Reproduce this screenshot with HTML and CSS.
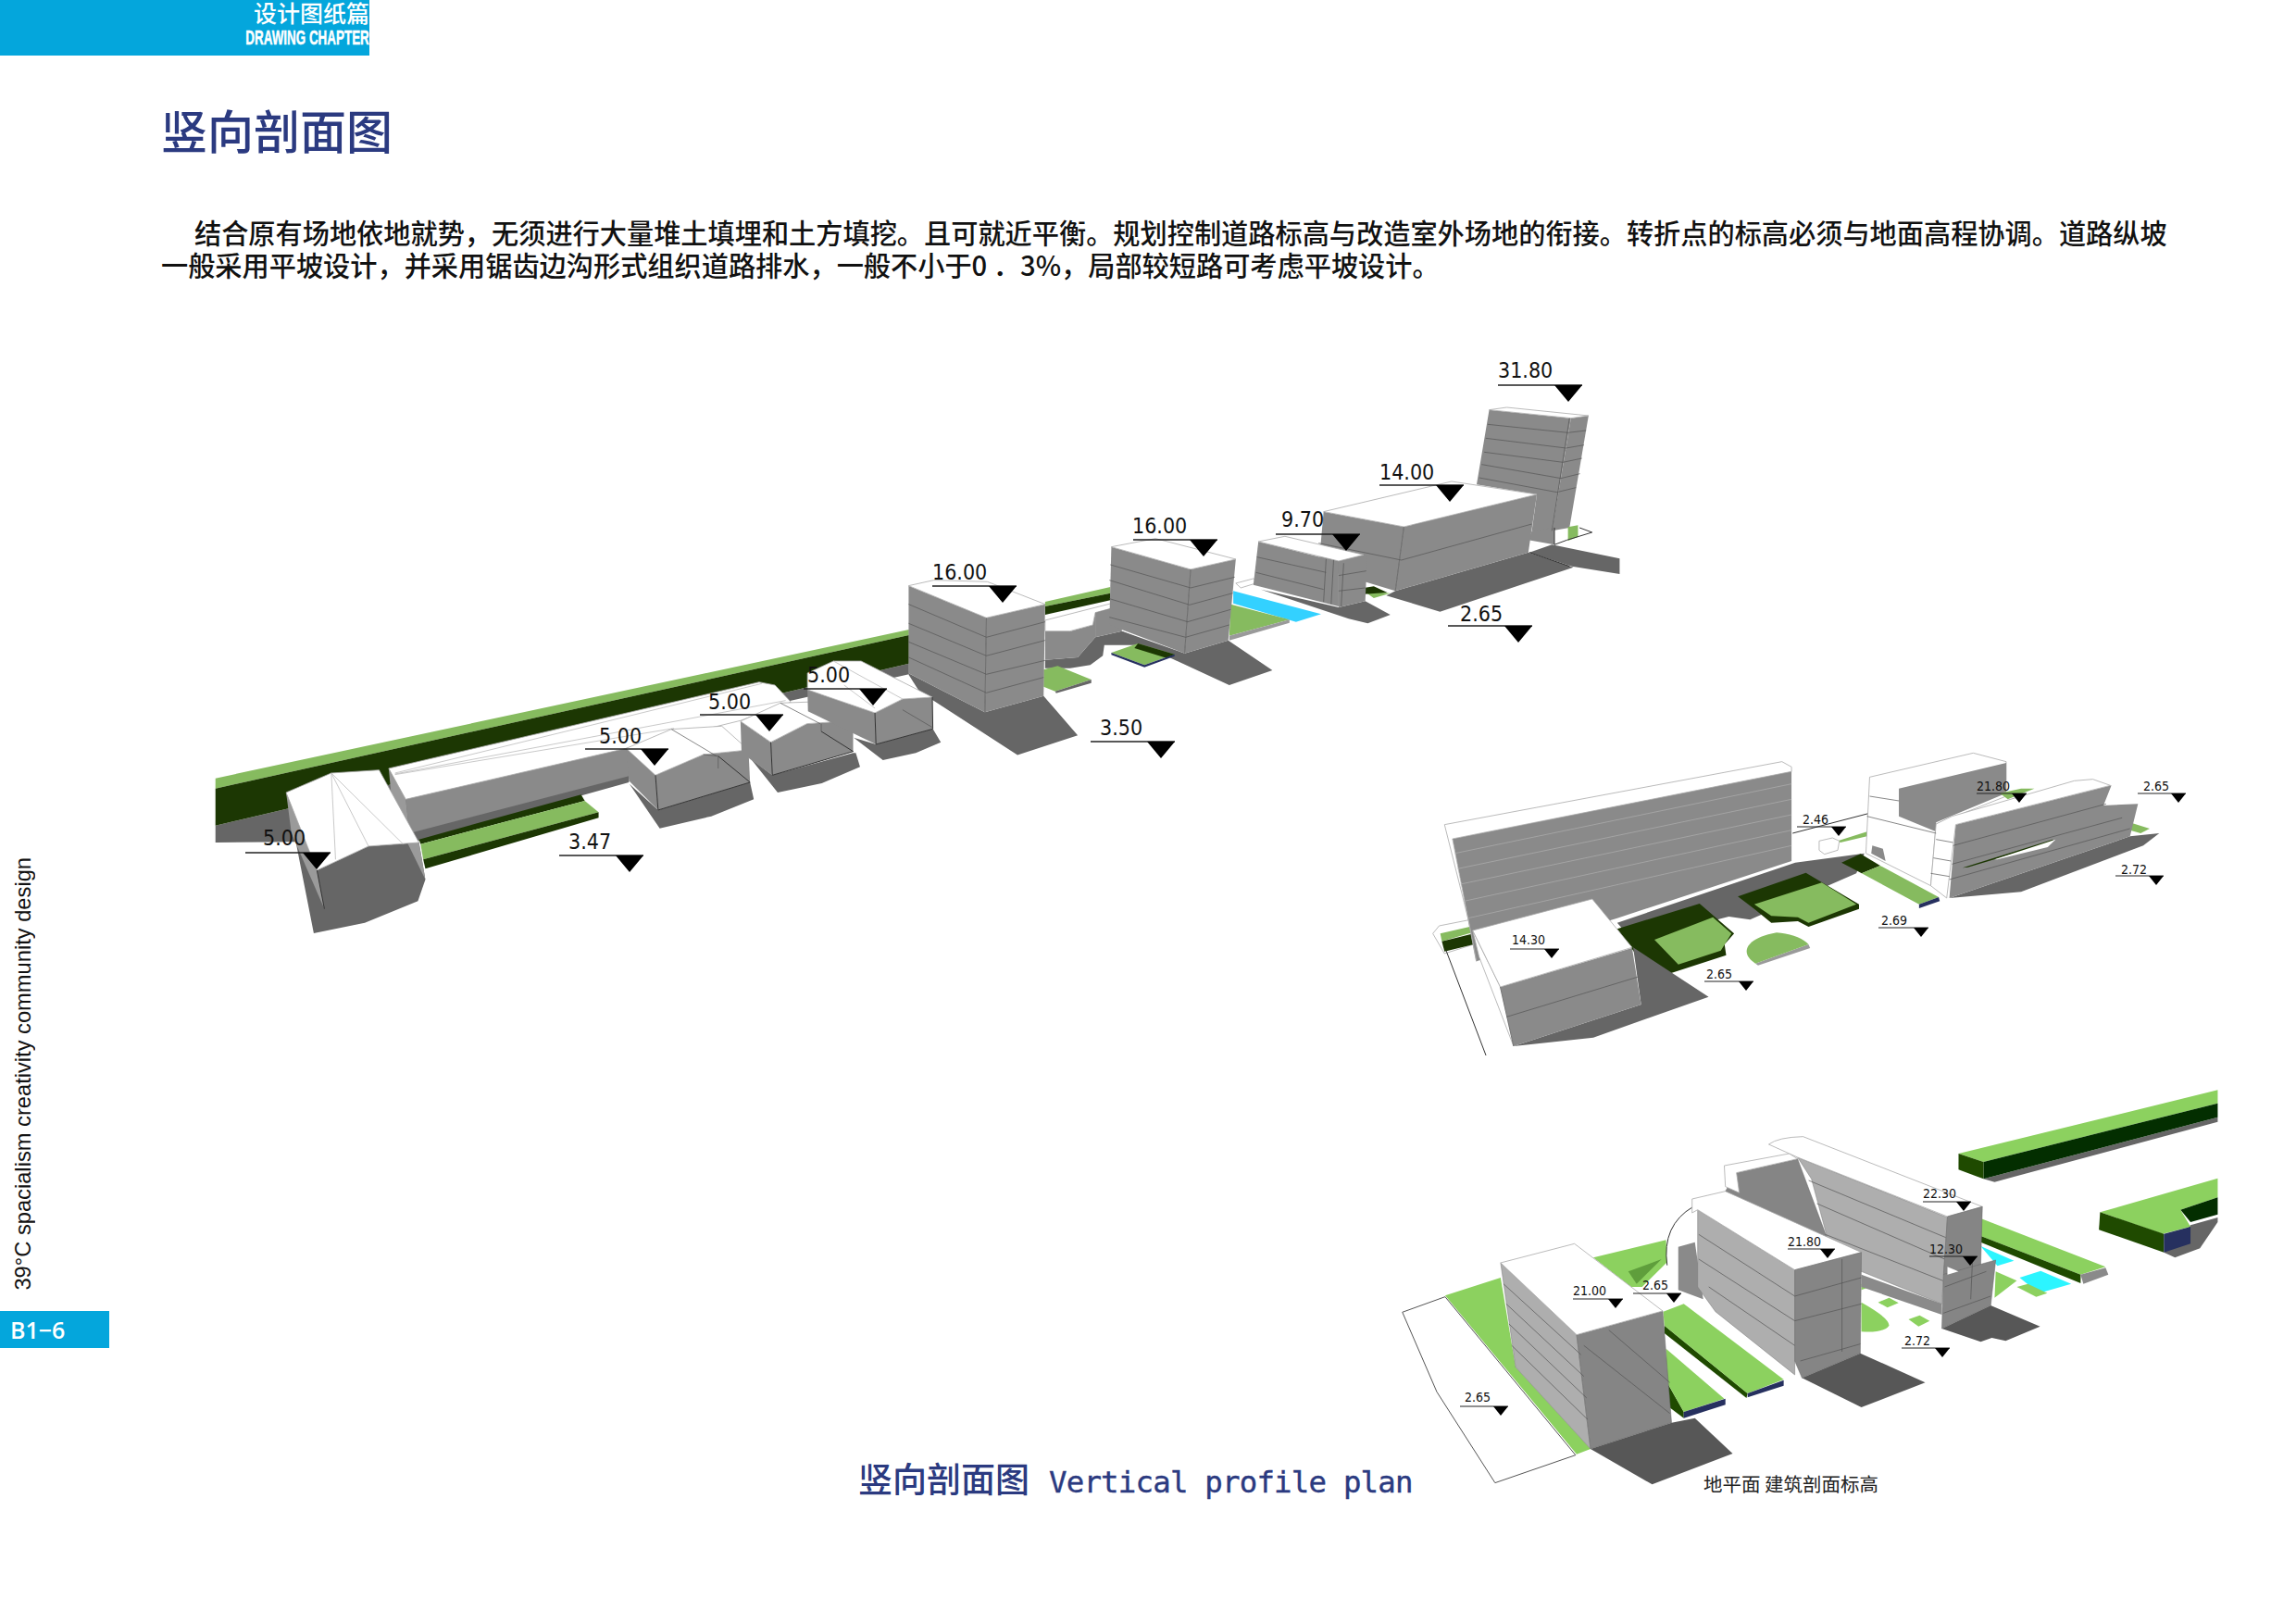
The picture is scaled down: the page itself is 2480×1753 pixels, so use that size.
FILE: index.html
```html
<!DOCTYPE html>
<html lang="zh-CN">
<head>
<meta charset="utf-8">
<title>竖向剖面图</title>
<link rel="stylesheet" href="styles.css">
</head>
<body>
<div class="page">
  <svg class="canvas" viewBox="0 0 2480 1753" width="2480" height="1753">
    <!-- shadow that runs under the first row of houses -->
    <g class="zb">
      <polygon class="s" points="58,1102 210,1228 327,1175 395,1303 275,1367 60,1140"/>
    </g>
    <!-- top model, left part -->
    <g class="za">
      <polygon class="s" points="57,875 1362,350 1362,385 1140,470 835,600 835,735 440,925 57,930"/>
      <polygon class="g" points="57,722 1362,240 1362,258 57,755"/>
      <polygon class="dg" points="57,755 1362,258 1362,350 57,875"/>
      <polygon class="w" points="1338,396 1362,388 1385,450 1360,450"/>
      <polygon class="f" points="415,790 835,620 835,715 422,900"/>
      <polygon class="f2" points="383,690 415,790 422,900 388,780"/>
      <polygon class="r" points="383,690 1080,410 1110,420 1140,475 1045,535 830,625 415,790"/>
      <path class="l" d="M395,705 1085,415M395,708 1130,470M395,710 920,560"/>
      <polygon class="dg" points="440,920 745,775 752,795 443,935"/>
      <polygon class="g" points="443,935 752,795 778,832 448,985"/>
      <polygon class="dg" points="448,985 778,832 778,850 452,1015"/>
      <polygon class="s" points="190,768 248,1020 345,942 440,930 452,1050 438,1120 338,1190 242,1224"/>
      <polygon class="f2" points="190,768 248,1020 262,1145 200,900"/>
      <polygon class="f2" points="418,930 440,930 452,1050"/>
      <polygon class="r" points="190,768 275,705 365,695 440,930 345,942 248,1020"/>
      <path class="l" d="M275,705 283,985M275,705 345,942M275,705 410,935"/>
      <path class="e" d="M248,1020 262,1145"/>
      <polygon class="s" points="836,740 890,825 1063,735 1070,790 990,845 893,884"/>
      <polygon class="f" points="830,625 885,712 890,825 835,730"/>
      <polygon class="f" points="885,712 975,645 1060,630 1063,735 890,825"/>
      <polygon class="r" points="830,625 915,563 1010,553 1060,630 975,645 885,712"/>
      <path class="e" d="M885,712 890,825 1063,735M1003,650 1063,735"/>
      <path class="n" d="M975,645 1003,650 1003,690M915,563 1000,650"/>
      <polygon class="s" points="1065,660 1105,712 1257,640 1262,640 1270,685 1198,738 1115,768"/>
      <polygon class="f" points="1045,537 1102,605 1105,712 1047,640"/>
      <polygon class="f" points="1102,605 1170,545 1257,535 1257,635 1105,712"/>
      <polygon class="r" points="1045,537 1120,478 1215,472 1257,535 1170,545 1102,605"/>
      <path class="e" d="M1102,605 1105,712 1257,635M1197,570 1257,635"/>
      <path class="n" d="M1197,545 1197,570M1120,478 1195,545"/>
      <polygon class="s" points="1258,590 1300,612 1407,562 1422,605 1375,640 1313,663"/>
      <polygon class="f" points="1171,435 1298,510 1300,612 1172,505"/>
      <polygon class="f" points="1298,510 1350,465 1406,459 1407,562 1300,612"/>
      <polygon class="r" points="1171,381 1220,342 1272,342 1406,459 1350,465 1298,510 1171,435"/>
      <path class="e" d="M1298,510 1300,612 1407,562M1406,459 1407,562"/>
      <path class="n" d="M1350,500 1407,558"/>
      <path class="l" d="M1220,342 1350,465M1240,420 1298,495"/>
    </g>
    <!-- top model, right part -->
    <g class="zb">
      <polygon class="g" points="330,870 460,822 460,842 330,885"/>
      <polygon class="dg" points="330,885 460,842 460,865 330,912"/>
      <polygon class="s" points="330,1058 395,1050 430,985 483,965 600,1040 510,1010 448,1010 445,1045 420,1075 380,1085 330,1085"/>
      <polygon class="f" points="330,965 380,965 425,945 430,905 430,985 395,1050 330,1058"/>
      <polygon class="r" points="330,930 470,872 485,882 430,905 425,945 380,965 330,965"/>
      <polygon class="f" points="430,905 485,880 483,965 430,985"/>
      <polygon class="g" points="327,1090 355,1078 422,1122 350,1160 327,1145"/>
      <polygon class="s" points="350,1160 422,1122 422,1133 352,1166"/>
      <polygon class="f" points="58,818 213,922 210,1228 58,1102"/>
      <polygon class="f" points="213,922 330,878 327,1175 210,1228"/>
      <polygon class="r" points="58,818 108,800 215,805 330,878 213,922"/>
      <path class="n" d="M58,878 213,985M58,940 213,1045M58,1000 213,1105M58,1050 213,1165M213,985 330,935M213,1045 330,995M213,1105 330,1060M213,1165 327,1115M213,922 210,1228"/>
      <polygon class="s" points="483,965 608,1037 695,995 783,1092 697,1140 490,985"/>
      <polygon class="g" points="462,1035 515,1005 588,1040 528,1075"/>
      <polygon class="dg" points="515,1005 588,1040 572,1052 508,1020"/>
      <polygon class="nv" points="462,1035 528,1075 588,1040 588,1046 528,1082 462,1042"/>
      <polygon class="cy" points="705,835 880,910 830,935 705,875"/>
      <polygon class="g" points="700,878 817,928 697,980"/>
      <polygon class="f2" points="697,980 817,928 817,938 697,995"/>
      <polygon class="f" points="462,692 620,765 608,1037 458,945"/>
      <polygon class="f" points="620,765 710,732 695,995 608,1037"/>
      <polygon class="r" points="462,692 550,665 710,732 620,765"/>
      <path class="n" d="M460,750 620,825M458,800 618,880M458,860 614,935M458,920 610,985M620,825 708,790M618,880 704,842M614,935 700,895M610,985 697,945M620,765 608,1037"/>
      <polygon class="s" points="1028,835 1293,710 1383,758 1117,902 1010,850"/>
      <polygon class="s" points="1295,710 1340,685 1475,730 1475,780 1380,755"/>
      <polygon class="f" points="1215,248 1378,275 1340,640 1300,640 1310,522 1190,490"/>
      <polygon class="f" points="1378,275 1413,267 1375,630 1340,640"/>
      <polygon class="f" points="1300,640 1345,630 1345,685 1293,670"/>
      <polygon class="r" points="1215,248 1250,240 1413,267 1378,275"/>
      <path class="n" d="M1212,295 1372,322M1208,340 1368,372M1205,385 1362,418M1200,425 1358,470M1195,468 1350,515M1372,322 1408,315M1368,372 1404,362M1362,418 1400,405M1358,470 1396,455M1350,515 1388,500M1375,275 1340,640"/>
      <polygon class="g" points="1372,628 1392,622 1392,660 1372,672"/>
      <path class="e" d="M1345,630 1345,685 1370,670 1420,645 1395,630"/>
      <polygon class="f" points="885,578 1045,627 1028,835 875,760"/>
      <polygon class="f" points="1045,627 1310,522 1293,710 1028,835"/>
      <polygon class="r" points="885,578 1140,480 1310,522 1045,627"/>
      <path class="n" d="M875,680 1040,735 1300,618M1045,627 1028,835"/>
      <polygon class="g" points="965,835 1000,840 1018,842 985,858"/>
      <polygon class="dg" points="965,825 985,820 1012,840 965,845"/>
      <path class="e" d="M1295,710 1375,755"/>
      <polygon class="s" points="760,830 915,888 968,868 1018,912 973,940 935,925"/>
      <polygon class="r" points="710,810 745,795 760,805 720,825"/>
      <polygon class="f" points="755,675 915,740 915,885 745,815"/>
      <polygon class="f" points="915,740 972,725 968,868 915,888"/>
      <polygon class="r" points="755,675 808,658 965,718 915,738"/>
      <path class="n" d="M752,725 890,775M750,775 885,830M915,785 970,770M915,835 968,825M890,732 885,870M905,735 900,878M925,745 920,885"/>
    </g>
    <!-- middle model -->
    <g class="zc">
      <polygon class="s" points="430,590 765,395 895,365 880,430 680,580 640,570 460,650"/>
      <polygon class="r" points="83,625 95,600 160,578 160,660 105,690"/>
      <polygon class="g" points="97,625 160,600 160,620 100,650"/>
      <polygon class="dg" points="100,650 160,625 160,660 105,683"/>
      <polygon class="f" points="120,318 758,95 758,390 430,575 165,715"/>
      <polygon class="r" points="105,272 740,68 758,85 758,100 120,318 165,715 150,580"/>
      <path class="nl" d="M125,365 758,140M130,415 758,190M135,465 758,240M142,520 758,290M150,575 758,340"/>
      <path class="e" d="M108,680 183,1020"/>
      <polygon class="dg" points="430,610 585,528 650,625 632,660 635,695 498,772 460,680"/>
      <polygon class="g" points="500,645 610,572 645,625 625,680 545,725"/>
      <polygon class="dg" points="657,505 785,428 885,530 885,545 790,603 770,585 720,590 688,545"/>
      <polygon class="g" points="688,530 815,460 880,530 790,590 770,572 720,568"/>
      <path class="f2" d="M690,722 790,660 793,672 695,728Z"/>
      <path class="g" d="M690,722C660,690 670,640 730,622 755,625 780,640 790,660Z"/>
      <polygon class="dg" points="852,395 888,367 925,405 890,430"/>
      <polygon class="g" points="890,430 925,405 1035,507 998,530"/>
      <polygon class="nv" points="998,530 1035,507 1037,520 998,543"/>
      <path class="e" d="M760,300 905,235"/>
      <polygon class="g" points="845,325 900,295 900,310 850,330"/>
      <polygon class="r" points="810,325 835,315 848,325 845,355 820,368 810,355"/>
      <polygon class="r" points="905,118 1100,40 1162,68 1162,180 1030,270 1020,470 898,365"/>
      <polygon class="f" points="960,155 1162,72 1162,170 1030,265 1030,295 960,245"/>
      <polygon class="s" points="1055,510 1395,310 1450,300 1420,340 1190,490"/>
      <polygon class="g" points="1400,268 1432,285 1415,300 1395,290"/>
      <polygon class="f" points="1067,272 1360,145 1345,210 1410,205 1395,310 1055,510"/>
      <polygon class="r" points="1030,270 1060,245 1290,130 1325,125 1358,145 1067,272 1050,510 1020,470"/>
      <path class="n" d="M905,180 960,195M900,245 1030,300M1062,340 1350,205M1060,400 1380,250M1055,450 1395,285M1030,320 1062,330M1025,380 1058,390M1020,430 1055,440"/>
      <polygon class="dg" points="1080,412 1250,320 1250,328 1090,410"/>
      <polygon class="w" points="1140,385 1255,320 1240,345 1145,385"/>
      <polygon class="f" points="910,340 930,350 935,390 908,365"/>
      <polygon class="g" points="1150,170 1190,155 1215,155 1165,190"/>
      <polygon class="s" points="235,990 475,855 460,670 602,830 385,962"/>
      <polygon class="f" points="210,798 458,672 475,855 235,990"/>
      <polygon class="r" points="158,615 210,798 235,990 170,700"/>
      <polygon class="r" points="158,615 383,513 458,670 210,798"/>
      <path class="n" d="M222,895 470,765M210,798 235,990"/>
    </g>
    <!-- bottom model -->
    <g class="zd">
      <polygon class="r2" points="58,772 135,722 370,1235 225,1325 120,1030"/>
      <polygon class="g2" points="402,595 533,538 535,610 490,690 470,690"/>
      <polygon class="g3" points="465,640 525,600 480,680"/>
      <polygon class="g2" points="135,718 235,660 262,950 397,1215 372,1232"/>
      <polygon class="sd" points="397,1215 543,1130 585,1115 653,1230 508,1330"/>
      <polygon class="dg2" points="535,1000 565,1095 565,1115 535,1075"/>
      <polygon class="g2" points="533,890 638,1052 565,1095 535,1000"/>
      <polygon class="nv" points="565,1095 640,1052 640,1072 565,1115"/>
      <polygon class="dg2" points="530,815 680,1035 678,1050 530,840"/>
      <polygon class="g2" points="528,770 565,745 745,990 680,1035 530,815"/>
      <polygon class="nv" points="680,1035 745,992 745,1010 680,1048"/>
      <polygon class="fl" points="235,612 372,845 397,1215 262,950"/>
      <polygon class="fr" points="372,845 527,768 543,1130 397,1215"/>
      <polygon class="r" points="235,612 368,550 527,768 372,845"/>
      <path class="n" d="M240,680 380,910M245,745 385,980M250,810 390,1050M255,880 392,1120M385,880 540,1100M430,830 540,1000"/>
      <polygon class="sd" points="778,985 883,905 1000,1000 885,1080"/>
      <path class="g2" d="M885,740Q935,790 935,815 925,840 885,835Z"/>
      <polygon class="g2" points="915,740 935,725 952,742 932,757"/>
      <polygon class="g2" points="970,795 990,782 1008,800 988,818"/>
      <polygon class="g2" points="885,680 900,690 885,700"/>
      <polygon class="f" points="885,650 1030,745 1030,780 885,690"/>
      <polygon class="g2" points="1100,468 1325,625 1280,650 1100,525"/>
      <polygon class="dg2" points="1100,525 1280,650 1280,678 1100,545"/>
      <polygon class="f" points="1280,650 1325,628 1330,650 1285,680"/>
      <polygon class="cy2" points="1100,558 1160,605 1130,622"/>
      <polygon class="cy2" points="1170,660 1208,638 1263,680 1205,710"/>
      <polygon class="g2" points="1127,640 1165,670 1125,725"/>
      <polygon class="g2" points="1165,690 1185,680 1220,710 1200,722"/>
      <polygon class="sd" points="1030,825 1118,750 1207,818 1145,865 1120,855 1100,868"/>
      <path class="w" d="M535,620Q525,490 582,430L640,600 590,640Z"/>
      <path class="e" d="M535,620Q525,490 582,430"/>
      <polygon class="f" points="555,560 585,545 600,730 555,700"/>
      <polygon class="fr" points="660,320 770,275 825,540 885,640 640,500 640,380"/>
      <polygon class="r" points="638,297 755,258 770,275 660,320 665,385 640,365"/>
      <polygon class="fl" points="770,270 1040,465 1030,745 885,640 825,540 795,340"/>
      <path class="n" d="M790,345 1037,530M805,420 1035,600M820,520 1032,670"/>
      <path class="r" d="M718,228Q735,205 780,203L1103,430 1040,462 770,270Z"/>
      <polygon class="fr" points="1040,462 1103,430 1100,620 1033,650"/>
      <polygon class="fl" points="590,440 765,635 765,975 622,770 590,690"/>
      <polygon class="r" points="580,405 640,380 885,578 765,635 590,440 580,450"/>
      <polygon class="fr" points="765,635 885,578 883,905 778,985 765,930"/>
      <path class="n" d="M592,520 765,720M592,600 765,800M610,690 765,880M765,720 885,660M765,800 885,745M775,930 883,875M850,600 850,900"/>
      <polygon class="fr" points="1033,650 1127,603 1118,750 1030,825"/>
      <polygon class="w" points="1040,625 1060,640 1040,650"/>
      <path class="n" d="M1033,775 1118,720M1035,690 1110,640M1085,610 1082,730"/>
      <polygon class="s" points="1105,340 1527,140 1527,155 1125,350"/>
      <polygon class="g2" points="1060,258 1527,52 1527,95 1105,285"/>
      <polygon class="dg3" points="1105,285 1527,95 1527,140 1105,340"/>
      <polygon class="dg2" points="1060,258 1105,285 1105,340 1060,310"/>
      <polygon class="s" points="1478,490 1527,465 1527,480 1495,565 1450,595 1430,578"/>
      <polygon class="g2" points="1315,448 1527,338 1527,400 1460,440 1478,495 1428,518"/>
      <polygon class="dg3" points="1460,440 1527,400 1527,455 1478,480"/>
      <polygon class="dg2" points="1315,448 1430,518 1430,578 1313,505"/>
      <polygon class="nv" points="1430,518 1478,495 1478,550 1430,578"/>
    </g>
    <!-- level marks -->
    <path class="mk" d="M265 921h92M604 924h91M632 809h90M756 772h90M868 744h90M1007 633h91M1224 583h91M1378 577h91M1490 524h91M1618 416h91M1564 676h91M1178 801h91"/>
    <path class="tri" d="M327 921h30l-15 18zM665 924h30l-15 18zM692 809h30l-15 18zM816 772h30l-15 18zM928 744h30l-15 18zM1068 633h30l-15 18zM1285 583h30l-15 18zM1439 577h30l-15 18zM1551 524h30l-15 18zM1679 416h30l-15 18zM1625 676h30l-15 18zM1239 801h30l-15 18z"/>
    <path class="mk thin" d="M1631 1025h53M1841 1060h53M2029 1002h54M1941 893h53M2135 857h54M2309 857h52M2285 946h52M1699 1403h54M1764 1397h52M1931 1349h51M2077 1298h52M2084 1357h52M2054 1456h52M1577 1519h52"/>
    <path class="tri" d="M1668 1025h16l-8 10zM1878 1060h16l-8 10zM2067 1002h16l-8 10zM1978 893h16l-8 10zM2173 857h16l-8 10zM2345 857h16l-8 10zM2321 946h16l-8 10zM1737 1403h16l-8 10zM1800 1397h16l-8 10zM1966 1349h16l-8 10zM2113 1298h16l-8 10zM2120 1357h16l-8 10zM2090 1456h16l-8 10zM1613 1519h16l-8 10z"/>
    <g class="lv">
      <text x="284" y="913">5.00</text>
      <text x="614" y="917">3.47</text>
      <text x="647" y="803">5.00</text>
      <text x="765" y="766">5.00</text>
      <text x="872" y="737">5.00</text>
      <text x="1007" y="626">16.00</text>
      <text x="1223" y="576">16.00</text>
      <text x="1384" y="569">9.70</text>
      <text x="1490" y="518">14.00</text>
      <text x="1618" y="408">31.80</text>
      <text x="1577" y="671">2.65</text>
      <text x="1188" y="794">3.50</text>
    </g>
    <g class="lv small">
      <text x="1633" y="1020">14.30</text>
      <text x="1843" y="1057">2.65</text>
      <text x="2032" y="999">2.69</text>
      <text x="1947" y="890">2.46</text>
      <text x="2135" y="854">21.80</text>
      <text x="2315" y="854">2.65</text>
      <text x="2291" y="944">2.72</text>
      <text x="1699" y="1399">21.00</text>
      <text x="1774" y="1393">2.65</text>
      <text x="1931" y="1346">21.80</text>
      <text x="2077" y="1294">22.30</text>
      <text x="2084" y="1354">12.30</text>
      <text x="2057" y="1453">2.72</text>
      <text x="1582" y="1514">2.65</text>
    </g>
  </svg>

  <header class="band">
    <div class="band-cn">设计图纸篇</div>
    <div class="band-en">DRAWING CHAPTER</div>
  </header>

  <main class="main">
    <h1 class="title">竖向剖面图</h1>
    <p class="intro">结合原有场地依地就势，无须进行大量堆土填埋和土方填挖。且可就近平衡。规划控制道路标高与改造室外场地的衔接。转折点的标高必须与地面高程协调。道路纵坡一般采用平坡设计，并采用锯齿边沟形式组织道路排水，一般不小于0 ．3%，局部较短路可考虑平坡设计。</p>
  </main>

  <div class="side">39°C spacialism creativity community design</div>
  <div class="tag">B1−6</div>
  <div class="cap">竖向剖面图<span class="cap-en">Vertical profile plan</span></div>
  <div class="cap2">地平面 建筑剖面标高</div>
</div>
</body>
</html>
```
FILE: styles.css
```css
* { box-sizing: border-box; }
html, body { margin: 0; padding: 0; background: #fff; }
.page {
  position: relative;
  width: 2480px;
  height: 1753px;
  overflow: hidden;
  background: #fff;
  font-family: "Noto Sans CJK SC", "Liberation Sans", sans-serif;
}
.canvas { position: absolute; left: 0; top: 0; }

/* header band */
.band {
  position: relative;
  width: 399px;
  height: 60px;
  background: #04a6dc;
  color: #fff;
  text-align: right;
}
.band-cn {
  font-size: 25px;
  font-weight: 500;
  line-height: 26px;
}
.band-en {
  position: absolute;
  right: 0;
  top: 30px;
  font-family: "Liberation Sans", sans-serif;
  font-weight: 700;
  font-size: 22px;
  line-height: 22px;
  white-space: nowrap;
  -webkit-text-stroke: .5px #fff;
  transform: scaleX(.61);
  transform-origin: right center;
}

/* heading and paragraph */
.main { position: relative; padding: 46px 136px 0 174px; }
.title {
  margin: 0;
  font-size: 50px;
  line-height: 66px;
  font-weight: 500;
  color: #2b3a80;
}
.intro {
  margin: 61px 0 0;
  font-size: 29.2px;
  line-height: 35px;
  font-weight: 500;
  color: #111;
  text-indent: 36px;
}

/* side label */
.side {
  position: absolute;
  left: 12px;
  top: 926px;
  writing-mode: vertical-rl;
  transform: rotate(180deg);
  font-family: "Liberation Sans", sans-serif;
  font-size: 23.7px;
  line-height: 26px;
  color: #111;
  white-space: nowrap;
}
.tag {
  position: absolute;
  left: 0;
  top: 1416px;
  width: 118px;
  height: 40px;
  padding-left: 11px;
  background: #04a6dc;
  color: #fff;
  font-family: "Open Sans", sans-serif;
  font-weight: 600;
  font-size: 25px;
  line-height: 40px;
}

/* captions */
.cap {
  position: absolute;
  left: 927px;
  top: 1571px;
  font-size: 37px;
  line-height: 50px;
  font-weight: 500;
  color: #2b3a80;
  white-space: nowrap;
}
.cap-en {
  margin-left: 21px;
  font-family: "DejaVu Sans Mono", monospace;
  font-size: 32.4px;
  font-weight: 400;
  letter-spacing: -.8px;
  -webkit-text-stroke: .4px #2b3a80;
}
.cap2 {
  position: absolute;
  left: 1840px;
  top: 1587px;
  font-size: 20.5px;
  line-height: 30px;
  color: #222;
  white-space: nowrap;
}

/* model drawing: coordinate frames */
.za { transform: translate(200px, 600px) scale(.574, .3333); }
.zb { transform: translate(950px, 360px) scale(.542, .3333); }
.zc { transform: translate(1500px, 800px) scale(.574, .3333); }
.zd { transform: translate(1480px, 1160px) scale(.5995, .3333); }

.canvas polygon, .canvas path { vector-effect: non-scaling-stroke; }
.g { fill: #86bb5f; }
.dg { fill: #1c3703; }
.g2 { fill: #8cd15f; }
.g3 { fill: #5f9e3c; }
.dg2 { fill: #1f4a00; }
.dg3 { fill: #032e00; }
.s { fill: #666; }
.sd { fill: #575757; }
.f { fill: #8a8a8a; }
.f2 { fill: #9a9a9a; }
.fl { fill: #aeaeae; stroke: #777; stroke-width: .5px; }
.fr { fill: #858585; stroke: #666; stroke-width: .5px; }
.w { fill: #fff; }
.r { fill: #fff; stroke: #aaa; stroke-width: .8px; }
.r2 { fill: #fff; stroke: #555; stroke-width: 1px; }
.cy { fill: #33d1ff; }
.cy2 { fill: #2cf5ff; }
.nv { fill: #26305f; }
.l { fill: none; stroke: #bbb; stroke-width: .8px; }
.n { fill: none; stroke: #555; stroke-width: .7px; }
.nl { fill: none; stroke: #aaa; stroke-width: .8px; }
.e { fill: none; stroke: #333; stroke-width: 1px; }

/* level marks */
.mk { fill: none; stroke: #222; stroke-width: 1.5px; }
.mk.thin { stroke-width: 1px; }
.tri { fill: #000; }
.lv text {
  font-family: "DejaVu Sans", sans-serif;
  font-stretch: condensed;
  font-size: 23px;
  fill: #111;
}
.lv.small text { font-size: 14px; }
```
